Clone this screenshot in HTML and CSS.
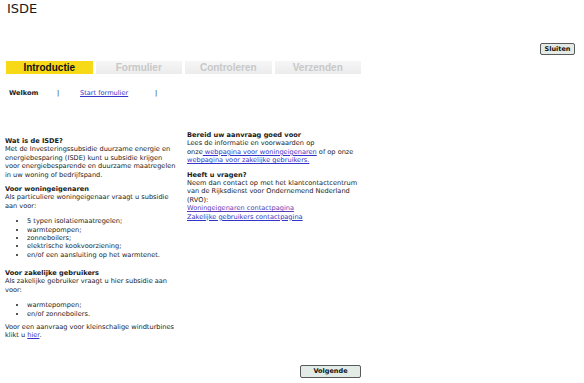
FILE: index.html
```html
<!DOCTYPE html>
<html lang="nl">
<head>
    <meta charset="UTF-8">
    <meta name="viewport" content="width=device-width, initial-scale=1.0">
    <title>ISDE</title>
    <link rel="stylesheet" href="styles.css">
</head>
<body>
    <h1 class="title">ISDE</h1>
    <div class="topbar">
        <button class="btn">Sluiten</button>
    </div>
    <div class="page">
        <div class="tabs">
            <div class="tab active">Introductie</div>
            <div class="tab">Formulier</div>
            <div class="tab">Controleren</div>
            <div class="tab">Verzenden</div>
        </div>
        <div class="subnav">
            <span class="current">Welkom</span>
            <span class="sep">|</span>
            <a href="#">Start formulier</a>
            <span class="sep">|</span>
        </div>
        <div class="content">
            <div class="col left">
                <h3>Wat is de ISDE?</h3>
                <p>Met de Investeringssubsidie duurzame energie en energiebesparing (ISDE) kunt u subsidie krijgen voor energiebesparende en duurzame maatregelen in uw woning of bedrijfspand.</p>
                <h3 class="gap">Voor woningeigenaren</h3>
                <p>Als particuliere woningeigenaar vraagt u subsidie aan voor:</p>
                <ul>
                    <li>5 typen isolatiemaatregelen;</li>
                    <li>warmtepompen;</li>
                    <li>zonneboilers;</li>
                    <li>elektrische kookvoorziening;</li>
                    <li>en/of een aansluiting op het warmtenet.</li>
                </ul>
                <h3 class="gap big">Voor zakelijke gebruikers</h3>
                <p>Als zakelijke gebruiker vraagt u hier subsidie aan voor:</p>
                <ul>
                    <li>warmtepompen;</li>
                    <li>en/of zonneboilers.</li>
                </ul>
                <p class="gap">Voor een aanvraag voor kleinschalige windturbines klikt u <a href="#">hier</a>.</p>
            </div>
            <div class="col right">
                <h3>Bereid uw aanvraag goed voor</h3>
                <p>Lees de informatie en voorwaarden op onze<a href="#">&nbsp;webpagina voor woningeigenaren</a> of op onze <a href="#">webpagina voor zakelijke gebruikers.</a></p>
                <h3 class="gap">Heeft u vragen?</h3>
                <p>Neem dan contact op met het klantcontactcentrum van de Rijksdienst voor Ondernemend Nederland (RVO):<br>
                <a href="#" class="visited">Woningeigenaren contactpagina </a><br>
                <a href="#">Zakelijke gebruikers contactpagina</a></p>
            </div>
        </div>
        <div class="footer">
            <button class="btn wide">Volgende</button>
        </div>
    </div>
</body>
</html>
```

FILE: styles.css
```css
* {
    padding: 0;
    margin: 0;
    box-sizing: border-box;
}
body {
    font-family: "DejaVu Sans", Verdana, sans-serif;
    color: #1a1a1a;
    background-color: #fff;
}
.title {
    font-size: 13px;
    font-weight: normal;
    line-height: 15px;
    padding: 1px 0 0 7px;
}
.topbar {
    display: flex;
    justify-content: flex-end;
    margin-top: 27px;
    padding-right: 9px;
}
.btn {
    font-family: "DejaVu Sans", Verdana, sans-serif;
    font-size: 6.5px;
    font-weight: bold;
    color: #111;
    background-color: #e2ebe6;
    border: 1px solid #5a5a5a;
    border-radius: 2px;
    width: 35px;
    height: 12px;
}
.btn.wide {
    width: 61px;
    height: 13px;
}
.page {
    width: 355px;
    margin-left: 6px;
}
.tabs {
    display: grid;
    grid-template-columns: repeat(4, 1fr);
    gap: 3px;
    margin-top: 6px;
}
.tab {
    height: 13px;
    line-height: 13px;
    text-align: center;
    font-family: "Liberation Sans", Arial, sans-serif;
    font-size: 10px;
    font-weight: bold;
    color: #c8c8c8;
    background: linear-gradient(#f6f6f6, #ececec);
}
.tab.active {
    color: #111;
    background: #f7d917;
}
.subnav {
    display: flex;
    margin-top: 15px;
    padding-left: 3px;
    font-size: 6.6px;
    line-height: 8px;
}
.subnav .current {
    font-weight: bold;
    width: 48px;
}
.subnav .sep {
    width: 23px;
    color: #222;
}
.subnav a {
    width: 75px;
}
a {
    color: #3434c8;
}
a.visited {
    color: #5a3ab8;
}
.content {
    display: flex;
    gap: 9px;
    margin-top: 34px;
    font-size: 6.6px;
    line-height: 8.4px;
}
.col {
    flex: none;
}
.left {
    width: 173px;
    margin-left: -1px;
    padding-top: 6px;
}
.right {
    width: 172px;
}
.col h3 {
    font-size: 6.6px;
    font-weight: bold;
}
.col .gap {
    margin-top: 6px;
}
.col .big {
    margin-top: 9.6px;
}
.col ul {
    margin-top: 7px;
    padding-left: 22px;
}
.col p.gap {
    margin-top: 5px;
}
.footer {
    display: flex;
    justify-content: flex-end;
    margin-top: 25px;
}
```
